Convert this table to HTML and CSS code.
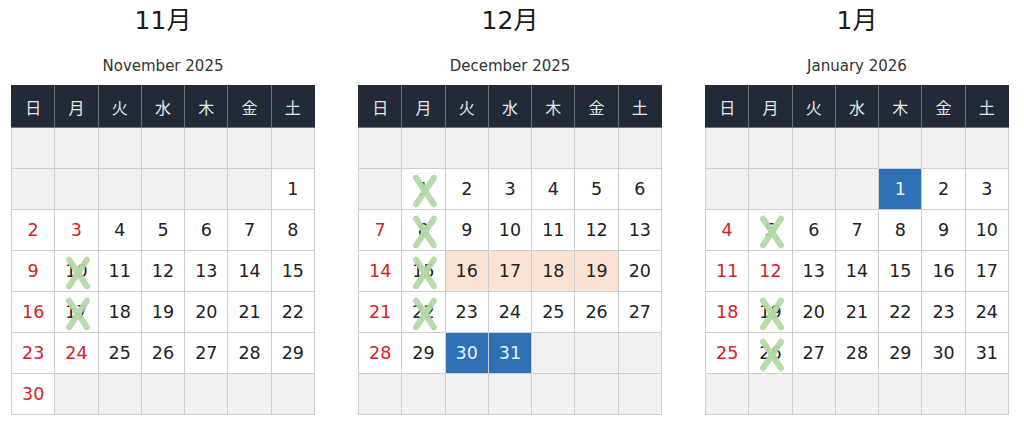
FILE: index.html
```html
<!DOCTYPE html>
<html lang="ja">
<head>
<meta charset="utf-8">
<title>カレンダー</title>
<link rel="stylesheet" href="styles.css">
</head>
<body>
<div class="months">
  <section class="month">
    <h2 class="month-title">11月</h2>
    <h3 class="month-sub">November 2025</h3>
    <table class="cal">
      <thead><tr><th>日</th><th>月</th><th>火</th><th>水</th><th>木</th><th>金</th><th>土</th></tr></thead>
      <tbody>
        <tr><td class="empty"></td><td class="empty"></td><td class="empty"></td><td class="empty"></td><td class="empty"></td><td class="empty"></td><td class="empty"></td></tr>
        <tr><td class="empty"></td><td class="empty"></td><td class="empty"></td><td class="empty"></td><td class="empty"></td><td class="empty"></td><td>1</td></tr>
        <tr><td class="hol">2</td><td class="hol">3</td><td>4</td><td>5</td><td>6</td><td>7</td><td>8</td></tr>
        <tr><td class="hol">9</td><td class="off">10<span class="x"></span></td><td>11</td><td>12</td><td>13</td><td>14</td><td>15</td></tr>
        <tr><td class="hol">16</td><td class="off">17<span class="x"></span></td><td>18</td><td>19</td><td>20</td><td>21</td><td>22</td></tr>
        <tr><td class="hol">23</td><td class="hol">24</td><td>25</td><td>26</td><td>27</td><td>28</td><td>29</td></tr>
        <tr><td class="hol">30</td><td class="empty"></td><td class="empty"></td><td class="empty"></td><td class="empty"></td><td class="empty"></td><td class="empty"></td></tr>
      </tbody>
    </table>
  </section>
  <section class="month">
    <h2 class="month-title">12月</h2>
    <h3 class="month-sub">December 2025</h3>
    <table class="cal">
      <thead><tr><th>日</th><th>月</th><th>火</th><th>水</th><th>木</th><th>金</th><th>土</th></tr></thead>
      <tbody>
        <tr><td class="empty"></td><td class="empty"></td><td class="empty"></td><td class="empty"></td><td class="empty"></td><td class="empty"></td><td class="empty"></td></tr>
        <tr><td class="empty"></td><td class="off">1<span class="x"></span></td><td>2</td><td>3</td><td>4</td><td>5</td><td>6</td></tr>
        <tr><td class="hol">7</td><td class="off">8<span class="x"></span></td><td>9</td><td>10</td><td>11</td><td>12</td><td>13</td></tr>
        <tr><td class="hol">14</td><td class="off">15<span class="x"></span></td><td class="peach">16</td><td class="peach">17</td><td class="peach">18</td><td class="peach">19</td><td>20</td></tr>
        <tr><td class="hol">21</td><td class="off">22<span class="x"></span></td><td>23</td><td>24</td><td>25</td><td>26</td><td>27</td></tr>
        <tr><td class="hol">28</td><td>29</td><td class="blue">30</td><td class="blue">31</td><td class="empty"></td><td class="empty"></td><td class="empty"></td></tr>
        <tr><td class="empty"></td><td class="empty"></td><td class="empty"></td><td class="empty"></td><td class="empty"></td><td class="empty"></td><td class="empty"></td></tr>
      </tbody>
    </table>
  </section>
  <section class="month">
    <h2 class="month-title">1月</h2>
    <h3 class="month-sub">January 2026</h3>
    <table class="cal">
      <thead><tr><th>日</th><th>月</th><th>火</th><th>水</th><th>木</th><th>金</th><th>土</th></tr></thead>
      <tbody>
        <tr><td class="empty"></td><td class="empty"></td><td class="empty"></td><td class="empty"></td><td class="empty"></td><td class="empty"></td><td class="empty"></td></tr>
        <tr><td class="empty"></td><td class="empty"></td><td class="empty"></td><td class="empty"></td><td class="blue">1</td><td>2</td><td>3</td></tr>
        <tr><td class="hol">4</td><td class="off">5<span class="x"></span></td><td>6</td><td>7</td><td>8</td><td>9</td><td>10</td></tr>
        <tr><td class="hol">11</td><td class="hol">12</td><td>13</td><td>14</td><td>15</td><td>16</td><td>17</td></tr>
        <tr><td class="hol">18</td><td class="off">19<span class="x"></span></td><td>20</td><td>21</td><td>22</td><td>23</td><td>24</td></tr>
        <tr><td class="hol">25</td><td class="off">26<span class="x"></span></td><td>27</td><td>28</td><td>29</td><td>30</td><td>31</td></tr>
        <tr><td class="empty"></td><td class="empty"></td><td class="empty"></td><td class="empty"></td><td class="empty"></td><td class="empty"></td><td class="empty"></td></tr>
      </tbody>
    </table>
  </section>
</div>
</body>
</html>
```

FILE: styles.css
```css
* { box-sizing: border-box; }
html, body { margin: 0; padding: 0; background: #fff; }
body {
  font-family: "DejaVu Sans", "Noto Sans CJK JP", sans-serif;
  color: #222;
}
.months {
  display: flex;
  gap: 43px;
  padding-left: 11px;
}
.month {
  width: 304px;
  display: flex;
  flex-direction: column;
  align-items: stretch;
}
.month-title {
  margin: 0;
  height: 42px;
  line-height: 42px;
  font-size: 25px;
  font-weight: normal;
  text-align: center;
  color: #1a1a1a;
}
.month-sub {
  margin: 13px 0 0;
  height: 22px;
  line-height: 22px;
  font-size: 15px;
  font-weight: normal;
  text-align: center;
  color: #333;
}
.cal {
  margin-top: 8px;
  width: 304px;
  border-collapse: collapse;
  table-layout: fixed;
}
.cal th {
  height: 42px;
  background: #212a36;
  color: #e6e8ea;
  font-family: "Noto Sans CJK JP", sans-serif;
  font-weight: normal;
  font-size: 16px;
  border: 1px solid #6b727c;
  border-top-color: #212a36;
  padding: 0;
}
.cal th:first-child { border-left-color: #212a36; }
.cal th:last-child { border-right-color: #212a36; }
.cal td {
  height: 41px;
  border: 1px solid #cfcfcf;
  text-align: center;
  vertical-align: middle;
  font-size: 17.5px;
  padding: 0;
  color: #222;
  background: #fff;
}
.cal td.empty { background: #f1f1f1; }
.cal td.hol { color: #d4212b; }
.cal td.peach { background: #fce2d3; }
.cal td.blue { background: #2e70b5; color: #e9f0f8; }
.cal td.off { position: relative; }
.x {
  position: absolute;
  left: 50%;
  top: 50%;
  width: 28px;
  height: 38px;
  margin-left: -12px;
  margin-top: -17px;
}
.x::before, .x::after {
  content: "";
  position: absolute;
  left: 11px;
  top: 0;
  width: 6px;
  height: 38px;
  border-radius: 3px;
  background: rgba(178, 216, 165, 0.93);
}
.x::before { transform: rotate(34deg); }
.x::after { transform: rotate(-34deg); }
```
